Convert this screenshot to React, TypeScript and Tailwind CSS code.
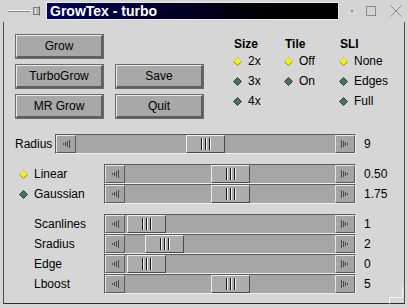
import React from 'react';

interface SliderProps {
  label: string;
  value: string;
  thumb: number;
  radio?: 'on' | 'off';
  wide?: boolean;
}

const Diamond: React.FC<{ on: boolean }> = ({ on }) => (
  <svg width="9" height="9" viewBox="0 0 9 9" className="shrink-0">
    <polygon
      points="4.5,0.5 8.5,4.5 4.5,8.5 0.5,4.5"
      fill={on ? '#f4f400' : '#4e6e6c'}
      stroke={on ? '#8a8a20' : '#2e3e3e'}
      strokeWidth="1"
    />
    {on && <polyline points="0.8,4.5 4.5,0.8 8.2,4.5" fill="none" stroke="#ffffa0" strokeWidth="0.8" />}
  </svg>
);

const ArrowBox: React.FC<{ dir: 'left' | 'right' }> = ({ dir }) => (
  <div className="w-[20px] h-full shrink-0 bg-[#a4a4a4] border-t border-l border-t-[#e6e6e6] border-l-[#e6e6e6] border-b border-r border-b-[#5a5a5a] border-r-[#5a5a5a] flex items-center justify-center">
    <svg width="10" height="10" viewBox="0 0 10 10">
      {dir === 'left' ? (
        <g stroke="#4a4a4a" strokeWidth="1">
          <line x1="2.5" y1="4" x2="2.5" y2="6" />
          <line x1="4.5" y1="3" x2="4.5" y2="7" />
          <line x1="6.5" y1="2" x2="6.5" y2="8" />
          <line x1="8.5" y1="1" x2="8.5" y2="9" />
        </g>
      ) : (
        <g stroke="#4a4a4a" strokeWidth="1">
          <line x1="1.5" y1="1" x2="1.5" y2="9" />
          <line x1="3.5" y1="2" x2="3.5" y2="8" />
          <line x1="5.5" y1="3" x2="5.5" y2="7" />
          <line x1="7.5" y1="4" x2="7.5" y2="6" />
        </g>
      )}
    </svg>
  </div>
);

const Thumb: React.FC<{ offset: number }> = ({ offset }) => (
  <div
    style={{ marginLeft: offset }}
    className="w-[39px] h-full shrink-0 bg-[#acacac] border-t border-l border-t-[#ececec] border-l-[#ececec] border-b border-r border-b-[#4a4a4a] border-r-[#4a4a4a] flex items-center justify-center gap-[2px]"
  >
    <div className="w-[2px] h-[12px] bg-[#1a1a1a] border-r border-r-[#f0f0f0]" />
    <div className="w-[2px] h-[12px] bg-[#1a1a1a] border-r border-r-[#f0f0f0]" />
    <div className="w-[2px] h-[12px] bg-[#1a1a1a] border-r border-r-[#f0f0f0]" />
  </div>
);

const Slider: React.FC<SliderProps> = ({ label, value, thumb, radio, wide }) => (
  <div className="flex items-center h-[20px]">
    <div className={wide ? 'w-[40px] text-[12px]' : 'w-[89px] flex items-center gap-[6px] pl-[4px] text-[12px]'}>
      {radio && <Diamond on={radio === 'on'} />}
      <span className={!radio && !wide ? 'pl-[15px]' : ''}>{label}</span>
    </div>
    <div className="flex-1 h-full flex bg-[#a6a6a6] border-t border-l border-t-[#5c5c5c] border-l-[#5c5c5c] border-b border-r border-b-[#eeeeee] border-r-[#eeeeee]">
      <ArrowBox dir="left" />
      <div className="flex-1 h-full flex">
        <Thumb offset={thumb} />
      </div>
      <ArrowBox dir="right" />
    </div>
    <div className="w-[44px] pl-[8px] text-[12px]">{value}</div>
  </div>
);

const Btn: React.FC<{ label: string }> = ({ label }) => (
  <div className="w-[89px] h-[25px] border border-[#6a6a6a]">
    <div className="w-full h-full bg-[#a8a8a8] border-t border-l border-t-[#eaeaea] border-l-[#eaeaea] border-b-2 border-r-2 border-b-[#5e5e5e] border-r-[#5e5e5e] flex items-center justify-center text-[12px]">
      {label}
    </div>
  </div>
);

const RadioCol: React.FC<{ title: string; items: string[]; w: string }> = ({ title, items, w }) => (
  <div className={`flex flex-col ${w}`}>
    <div className="text-[12px] font-bold h-[16px] leading-[16px] pl-[1px]">{title}</div>
    <div className="flex flex-col gap-[4px] mt-[1px]">
      {items.map((it, i) => (
        <div key={it} className="flex items-center gap-[6px] h-[16px] text-[12px]">
          <Diamond on={i === 0} />
          <span>{it}</span>
        </div>
      ))}
    </div>
  </div>
);

const App: React.FC = () => {
  return (
    <div className="w-[408px] h-[308px] bg-[#d6d6d6] text-black overflow-hidden" style={{ fontFamily: '"Liberation Sans", Arial, sans-serif' }}>
      {/* title bar */}
      <div className="h-[22px] flex items-center bg-[#d4d4d4]">
        <div className="w-[46px] h-full flex items-center pl-[7px]">
          <svg width="36" height="10" viewBox="0 0 36 10">
            <line x1="1" y1="4.5" x2="23" y2="4.5" stroke="#f4f4f4" strokeWidth="1" />
            <line x1="1" y1="5.5" x2="23" y2="5.5" stroke="#8a8a8a" strokeWidth="1" />
            <line x1="22" y1="4.5" x2="28" y2="4.5" stroke="#f4f4f4" />
            <rect x="26.5" y="1.5" width="6" height="7" fill="#b8b8b8" stroke="#7a7a7a" />
            <line x1="28.5" y1="2" x2="28.5" y2="8" stroke="#f0f0f0" />
            <line x1="32.5" y1="0.5" x2="32.5" y2="9.5" stroke="#6a6a6a" />
          </svg>
        </div>
        <div className="w-[293px] h-[18px] border border-[#ececec] bg-gradient-to-r from-[#00005e] to-[#000000] flex items-center pl-[3px]">
          <span className="text-white font-bold text-[14px] leading-none">GrowTex - turbo</span>
        </div>
        <div className="flex-1 h-full flex items-center">
          <div className="w-[2px] h-[2px] bg-[#8a8a8a] ml-[12px]" />
          <div className="w-[10px] h-[10px] border border-[#8a8a8a] ml-[13px]" />
          <svg width="12" height="12" viewBox="0 0 12 12" className="ml-[14px]">
            <line x1="0.5" y1="0.5" x2="11.5" y2="11.5" stroke="#8a8a8a" />
            <line x1="11.5" y1="0.5" x2="0.5" y2="11.5" stroke="#8a8a8a" />
          </svg>
        </div>
      </div>

      {/* body */}
      <div className="ml-[3px] w-[402px] h-[282px] border-l border-b border-r border-l-[#4e4e4e] border-b-[#2e2e2e] border-r-[#4e4e4e] pl-[11px] pt-[12px] relative">
        <div className="flex">
          <div className="grid grid-cols-2 gap-x-[11px] gap-y-[5px] w-[189px]">
            <Btn label="Grow" />
            <div />
            <Btn label="TurboGrow" />
            <Btn label="Save" />
            <Btn label="MR Grow" />
            <Btn label="Quit" />
          </div>
          <div className="flex ml-[29px] mt-[2px]">
            <RadioCol title="Size" items={['2x', '3x', '4x']} w="w-[51px]" />
            <RadioCol title="Tile" items={['Off', 'On']} w="w-[55px]" />
            <RadioCol title="SLI" items={['None', 'Edges', 'Full']} w="w-[60px]" />
          </div>
        </div>

        <div className="mt-[15px] w-[385px]">
          <Slider label="Radius" value="9" thumb={110} wide />
        </div>

        <div className="mt-[10px] w-[385px] flex flex-col">
          <Slider label="Linear" value="0.50" thumb={86} radio="on" />
          <Slider label="Gaussian" value="1.75" thumb={86} radio="off" />
        </div>

        <div className="mt-[10px] w-[385px] flex flex-col">
          <Slider label="Scanlines" value="1" thumb={2} />
          <Slider label="Sradius" value="2" thumb={20} />
          <Slider label="Edge" value="0" thumb={2} />
          <Slider label="Lboost" value="5" thumb={86} />
        </div>

        <svg width="16" height="18" viewBox="0 0 16 18" className="absolute right-[-1px] bottom-[-1px]">
          <polyline points="0.5,17.5 0.5,11.5 13.5,11.5 13.5,0.5" fill="none" stroke="#f4f4f4" />
        </svg>
      </div>
    </div>
  );
};

export default App;
